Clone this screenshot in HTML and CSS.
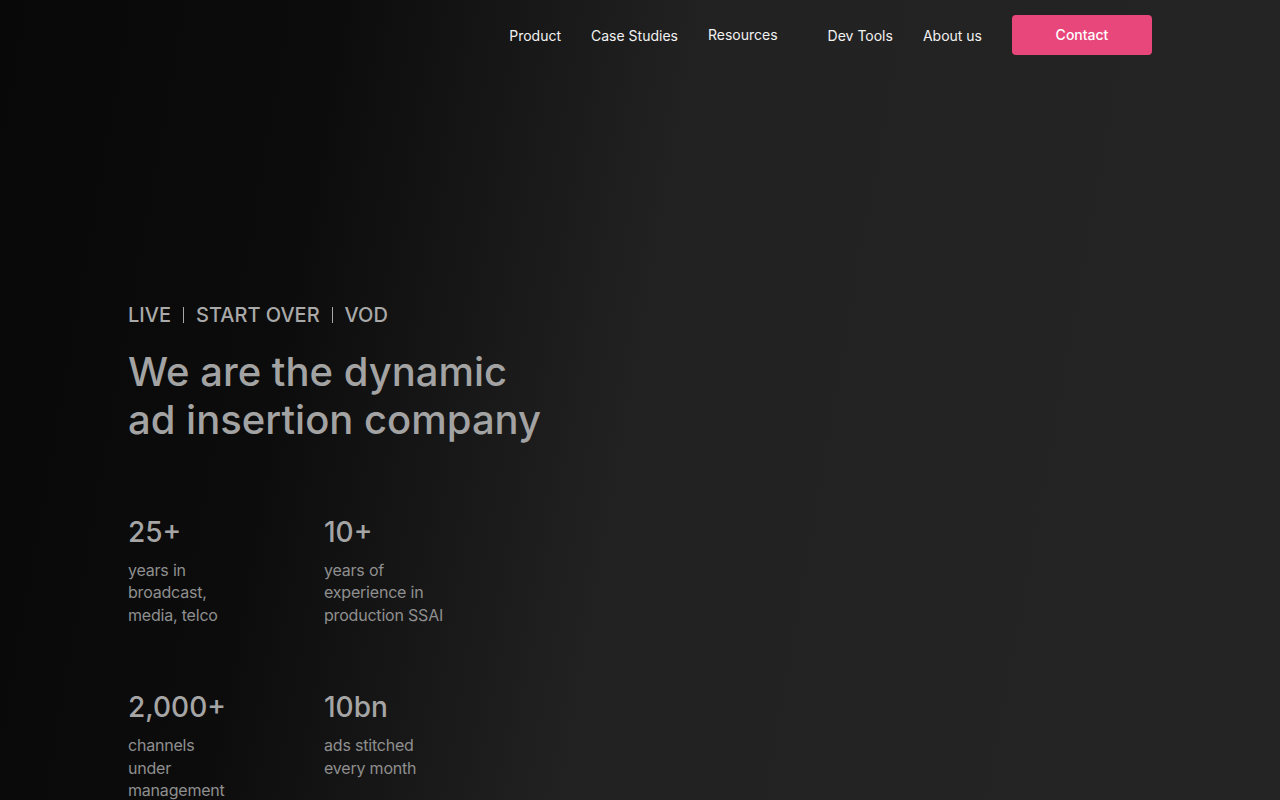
FILE: index.html
```html
<!DOCTYPE html>
<html lang="en">
<head>
    <meta charset="UTF-8">
    <meta name="viewport" content="width=device-width, initial-scale=1.0">
    <title>Dynamic Ad Insertion</title>
    <link rel="stylesheet" href="styles.css">
</head>
<body>
    <header class="site-header">
        <nav class="nav">
            <a href="#" class="nav-link">Product</a>
            <a href="#" class="nav-link">Case Studies</a>
            <a href="#" class="nav-link nav-link-menu">Resources</a>
            <a href="#" class="nav-link">Dev Tools</a>
            <a href="#" class="nav-link">About us</a>
            <a href="#" class="contact-button">Contact</a>
        </nav>
    </header>

    <main class="hero">
        <p class="tagline">
            <span>LIVE</span>
            <span class="tag-sep">START OVER</span>
            <span class="tag-sep">VOD</span>
        </p>
        <h1 class="headline">We are the dynamic<br>ad insertion company</h1>

        <div class="stats">
            <div class="stat">
                <div class="stat-value">25+</div>
                <p class="stat-label">years in<br>broadcast,<br>media, telco</p>
            </div>
            <div class="stat">
                <div class="stat-value">10+</div>
                <p class="stat-label">years of<br>experience in<br>production SSAI</p>
            </div>
            <div class="stat">
                <div class="stat-value">2,000+</div>
                <p class="stat-label">channels<br>under<br>management</p>
            </div>
            <div class="stat">
                <div class="stat-value">10bn</div>
                <p class="stat-label">ads stitched<br>every month</p>
            </div>
        </div>
    </main>
</body>
</html>
```

FILE: styles.css
```css
body {
    font-family: Inter, "Noto Sans", sans-serif;
    margin: 0;
    padding: 0;
    min-height: 100vh;
    color: #a3a3a3;
    background: linear-gradient(100deg, #080808 0%, #0c0c0c 24%, #222222 50%, #242424 100%);
    background-attachment: fixed;
    overflow: hidden;
}

.site-header {
    padding: 15px 128px 0;
}

.nav {
    display: flex;
    justify-content: flex-end;
    align-items: center;
    gap: 30px;
}

.nav-link {
    color: #f2f2f2;
    text-decoration: none;
    font-size: 14px;
    line-height: 40px;
    position: relative;
    top: 1px;
}

.nav-link-menu {
    margin-right: 20px;
    top: 0;
}

.contact-button {
    display: block;
    width: 140px;
    height: 40px;
    line-height: 40px;
    text-align: center;
    background-color: #e8477c;
    color: #fff;
    border-radius: 4px;
    text-decoration: none;
    font-size: 14px;
    font-weight: 500;
}

.hero {
    padding: 248px 128px 0;
}

.tagline {
    margin: 0;
    font-size: 20px;
    line-height: 24px;
    font-weight: 500;
    color: #a9a9a9;
    display: flex;
}

.tag-sep {
    margin-left: 12px;
    padding-left: 12px;
    border-left: 1px solid #a9a9a9;
    line-height: 16px;
    align-self: center;
}

.headline {
    margin: 21px 0 0;
    font-size: 40px;
    line-height: 48px;
    font-weight: 500;
    color: #a3a3a3;
}

.stats {
    margin-top: 70px;
    display: grid;
    grid-template-columns: 196px 196px;
    row-gap: 63px;
}

.stat-value {
    font-size: 28px;
    line-height: 36px;
    font-weight: 500;
    color: #a5a5a5;
}

.stat-label {
    margin: 9px 0 0;
    font-size: 16px;
    line-height: 22.4px;
    letter-spacing: -0.2px;
    color: #8f8f8f;
}
```
